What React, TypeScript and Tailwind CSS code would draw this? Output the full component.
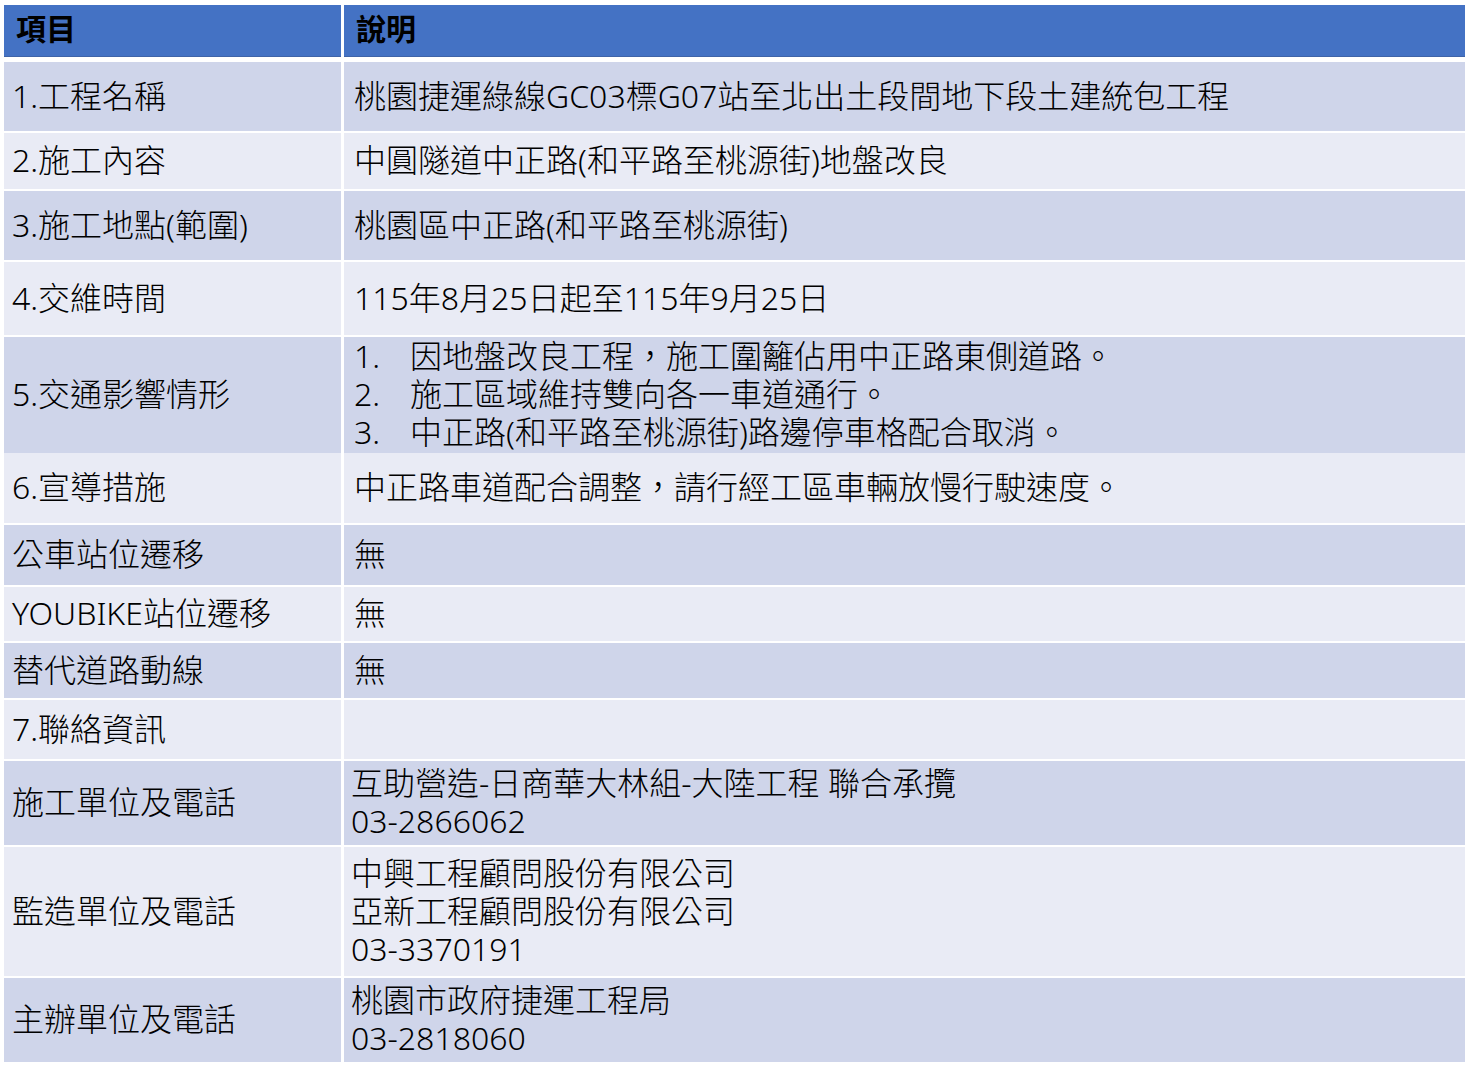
import React from "react";

const FONT = { fontFamily: '"Noto Sans", "Noto Sans CJK TC", sans-serif' };

type Row = {
  label: string;
  h: string;
  bg: string;
  content: React.ReactNode;
  multi?: boolean;
};

const ODD = "bg-[#cfd5ea]";
const EVEN = "bg-[#e9ebf5]";

const rows: Row[] = [
  { label: "1.工程名稱", h: "h-[69px]", bg: ODD, content: "桃園捷運綠線GC03標G07站至北出土段間地下段土建統包工程" },
  { label: "2.施工內容", h: "h-[56px]", bg: EVEN, content: "中圓隧道中正路(和平路至桃源街)地盤改良" },
  { label: "3.施工地點(範圍)", h: "h-[69px]", bg: ODD, content: "桃園區中正路(和平路至桃源街)" },
  { label: "4.交維時間", h: "h-[73px]", bg: EVEN, content: "115年8月25日起至115年9月25日" },
  {
    label: "5.交通影響情形",
    h: "h-[114px]",
    bg: ODD,
    content: (
      <div className="grid grid-cols-[56px_1fr]">
        <span>1.</span>
        <span>因地盤改良工程，施工圍籬佔用中正路東側道路。</span>
        <span>2.</span>
        <span>施工區域維持雙向各一車道通行。</span>
        <span>3.</span>
        <span>中正路(和平路至桃源街)路邊停車格配合取消。</span>
      </div>
    ),
  },
  { label: "6.宣導措施", h: "h-[70px]", bg: EVEN, content: "中正路車道配合調整，請行經工區車輛放慢行駛速度。" },
  { label: "公車站位遷移", h: "h-[60px]", bg: ODD, content: "無" },
  { label: "YOUBIKE站位遷移", h: "h-[54px]", bg: EVEN, content: "無" },
  { label: "替代道路動線", h: "h-[55px]", bg: ODD, content: "無" },
  { label: "7.聯絡資訊", h: "h-[59px]", bg: EVEN, content: "" },
  {
    label: "施工單位及電話",
    h: "h-[84px]",
    bg: ODD,
    multi: true,
    content: (
      <div className="flex flex-col">
        <span>互助營造-日商華大林組-大陸工程 聯合承攬</span>
        <span>03-2866062</span>
      </div>
    ),
  },
  {
    label: "監造單位及電話",
    h: "h-[129px]",
    bg: EVEN,
    multi: true,
    content: (
      <div className="flex flex-col">
        <span>中興工程顧問股份有限公司</span>
        <span>亞新工程顧問股份有限公司</span>
        <span>03-3370191</span>
      </div>
    ),
  },
  {
    label: "主辦單位及電話",
    h: "h-[84px]",
    bg: ODD,
    multi: true,
    content: (
      <div className="flex flex-col">
        <span>桃園市政府捷運工程局</span>
        <span>03-2818060</span>
      </div>
    ),
  },
];

export default function App() {
  return (
    <div className="w-[1471px] h-[1068px] bg-white overflow-hidden text-black" style={FONT}>
      <div className="pt-[5px] pl-[4px] w-[1465px] flex flex-col">
        <div className="grid grid-cols-[337px_1121px] gap-x-[3px] h-[52px] mb-[5px]">
          <div className="bg-[#4472c4] flex items-center pl-[12px] pb-[4px] text-[30px] font-bold leading-none border-b border-[#3f64a8]">
            項目
          </div>
          <div className="bg-[#4472c4] flex items-center pl-[12px] pb-[4px] text-[30px] font-bold leading-none border-b border-[#3f64a8]">
            說明
          </div>
        </div>
        <div className="flex flex-col gap-y-[2px]">
          {rows.map((r, i) => (
            <div key={i} className={`grid grid-cols-[337px_1121px] gap-x-[3px] ${r.h}`}>
              <div className={`${r.bg} flex items-center pl-[8px] pb-[2px] text-[32px] font-light leading-[38px] whitespace-nowrap`}>
                {r.label}
              </div>
              <div
                className={`${r.bg} flex items-center ${r.multi ? "pl-[7px]" : "pl-[10px]"} pb-[2px] text-[32px] font-light leading-[38px] whitespace-nowrap`}
              >
                {r.content}
              </div>
            </div>
          ))}
        </div>
      </div>
    </div>
  );
}
